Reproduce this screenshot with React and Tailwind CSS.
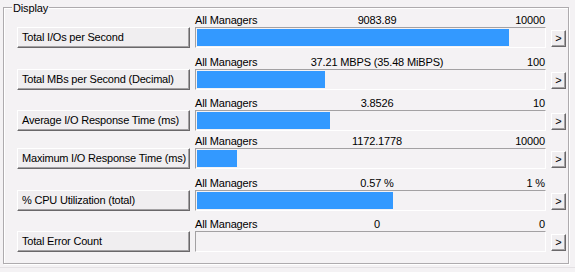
import React from "react";

const rows = [
  { name: "Total I/Os per Second", mid: "9083.89", max: "10000", frac: 9083.89 / 10000, mt: "mt-[6px]" },
  { name: "Total MBs per Second (Decimal)", mid: "37.21 MBPS (35.48 MiBPS)", max: "100", frac: 37.21 / 100, mt: "mt-[8px]" },
  { name: "Average I/O Response Time (ms)", mid: "3.8526", max: "10", frac: 3.8526 / 10, mt: "mt-[7px]" },
  { name: "Maximum I/O Response Time (ms)", mid: "1172.1778", max: "10000", frac: 1172.1778 / 10000, mt: "mt-[4px]" },
  { name: "% CPU Utilization (total)", mid: "0.57 %", max: "1 %", frac: 0.57, mt: "mt-[8px]" },
  { name: "Total Error Count", mid: "0", max: "0", frac: 0, mt: "mt-[7px]" },
];

function Row({ r }) {
  return (
    <div className={`${r.mt} grid grid-cols-[173px_351px_15px] gap-x-[5px]`}>
      <div />
      <div className="grid h-[13px] grid-cols-[1fr_auto_1fr] whitespace-nowrap tracking-[-0.15px]">
        <span>All Managers</span>
        <span className="pl-[13px]">{r.mid}</span>
        <span className="pr-[1px] text-right">{r.max}</span>
      </div>
      <div />
      <button className="flex h-[21px] items-center overflow-hidden border border-b-[#6a686a] border-l-white border-r-[#6a686a] border-t-white bg-[#f0eef0] pl-[4px] text-left tracking-[-0.2px] shadow-[inset_-1px_-1px_0_#a3a1a3] whitespace-nowrap">
        {r.name}
      </button>
      <div className="h-[21px] border border-b-white border-l-[#a3a1a3] border-r-white border-t-[#a3a1a3] p-[1px]">
        <div className="h-[17px] bg-[#3399ff]" style={{ width: `${Math.round(r.frac * 344)}px` }} />
      </div>
      <button className="mt-[3px] flex h-[17px] w-[15px] items-center justify-center border border-b-[#6a686a] border-l-white border-r-[#6a686a] border-t-white bg-[#f0eef0] pb-[1px] text-[11px] shadow-[inset_-1px_-1px_0_#a3a1a3]">
        &gt;
      </button>
    </div>
  );
}

export default function App() {
  return (
    <div className="h-[272px] w-[575px] overflow-hidden bg-[#f4f2f4] font-['Liberation_Sans',Arial,sans-serif] text-[11px] leading-[13px] text-black">
      <div className="pl-[3px] pt-[7px]">
        <div className="relative h-[257px] w-[566px] border border-[#aeabae] shadow-[inset_1px_1px_0_#ffffff,1px_1px_0_#ffffff]">
          <span className="absolute left-[8px] top-[-6px] bg-[#f4f2f4] px-[1px] tracking-[-0.15px]">Display</span>
          <div className="pl-[13px]">
            {rows.map((r) => (
              <Row key={r.name} r={r} />
            ))}
          </div>
        </div>
      </div>
      <div className="mt-[3px] h-[1px] w-full bg-[#e4e1e4]" />
    </div>
  );
}
